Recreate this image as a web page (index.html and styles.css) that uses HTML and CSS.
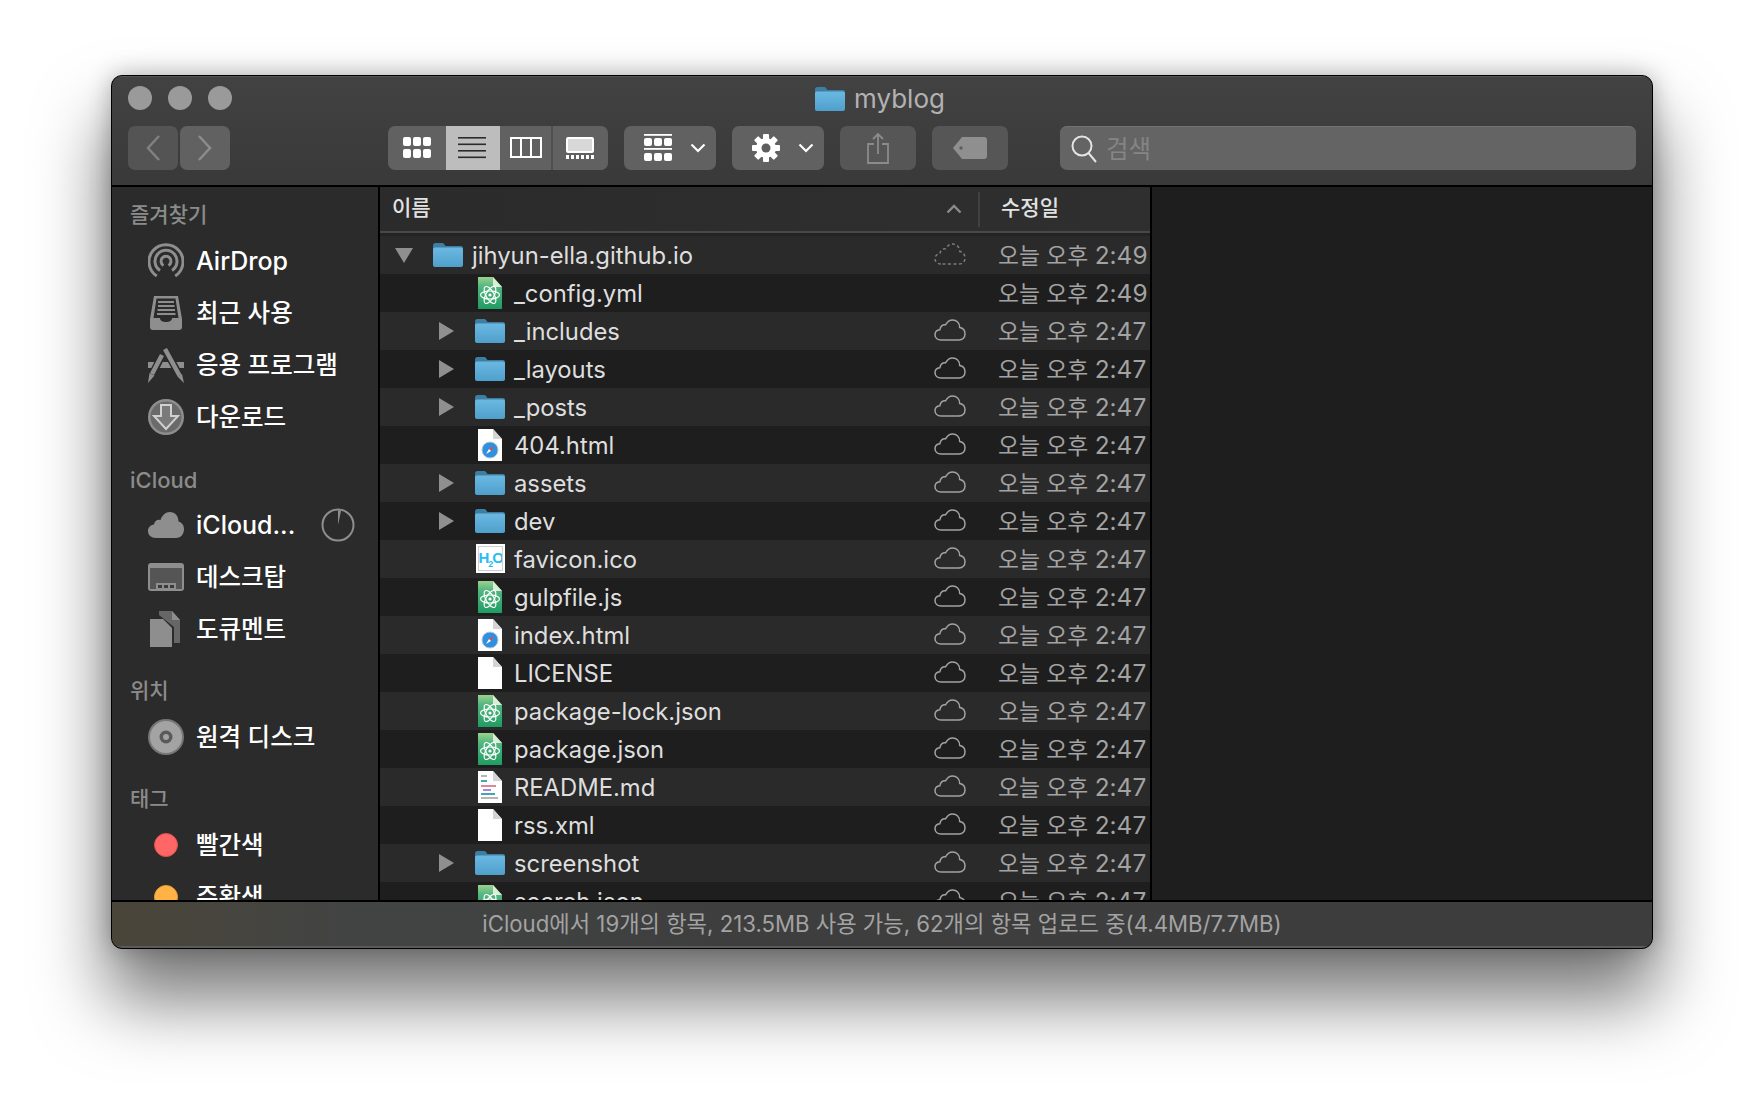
FILE: index.html
```html
<!DOCTYPE html>
<html lang="ko">
<head>
    <meta charset="utf-8">
    <title>myblog</title>
    <link rel="stylesheet" href="styles.css">
</head>
<body>
    <svg class="defs" width="0" height="0">
        <defs>
            <linearGradient id="folderFill" x1="0" y1="0" x2="0" y2="1">
                <stop offset="0" stop-color="#6bb9e2"/>
                <stop offset="1" stop-color="#4f9fcc"/>
            </linearGradient>
            <linearGradient id="atomFill" x1="0" y1="0" x2="0" y2="1">
                <stop offset="0" stop-color="#9bd28c"/>
                <stop offset="0.3" stop-color="#52b680"/>
                <stop offset="1" stop-color="#1f9c62"/>
            </linearGradient>
            <symbol id="folder" viewBox="0 0 30 24">
                <path d="M0 2.500C0 1 1 0 2.500 0H9c1 0 1.600.4 2.200 1.200L12.500 3H28c1.200 0 2 .8 2 2v4H0z" fill="#3f7ea3"/>
                <path d="M0 6.500C0 5.300.8 4.500 2 4.500h26c1.200 0 2 .8 2 2V22c0 1.200-.8 2-2 2H2c-1.200 0-2-.8-2-2z" fill="url(#folderFill)"/>
            </symbol>
            <symbol id="cloud" viewBox="0 0 32 22">
                <path d="M7 21C3.500 21 1 18.800 1 15.800c0-2.800 2-4.800 4.800-5C6.500 7 9 5.300 11.500 5.800 13.300 2.800 15.600 1 18.500 1c4.200 0 7 3 7.200 7.400 3.300.6 5.300 3.300 5.300 6.400 0 3.600-2.300 6.200-6 6.200z" fill="none" stroke="#a3a3a3" stroke-width="1.500"/>
            </symbol>
            <symbol id="cloudDash" viewBox="0 0 32 22">
                <path d="M7 21C3.500 21 1 18.800 1 15.800c0-2.800 2-4.800 4.800-5C6.500 7 9 5.300 11.500 5.800 13.300 2.800 15.600 1 18.500 1c4.200 0 7 3 7.200 7.400 3.300.6 5.300 3.300 5.300 6.400 0 3.600-2.300 6.200-6 6.200z" fill="none" stroke="#7c7c7c" stroke-width="1.500" stroke-dasharray="3 2.500"/>
            </symbol>
            <symbol id="atomDoc" viewBox="0 0 24 32">
                <path d="M0 0H15L24 10V32H0z" fill="url(#atomFill)"/>
                <path d="M15 0L24 10H15z" fill="#dcefd6"/>
                <g fill="none" stroke="#fff" stroke-width="1.200">
                    <ellipse cx="12" cy="18" rx="9.500" ry="4"/>
                    <ellipse cx="12" cy="18" rx="9.500" ry="4" transform="rotate(60 12 18)"/>
                    <ellipse cx="12" cy="18" rx="9.500" ry="4" transform="rotate(120 12 18)"/>
                </g>
                <circle cx="12" cy="18" r="1.600" fill="#fff"/>
            </symbol>
            <symbol id="safariDoc" viewBox="0 0 24 32">
                <path d="M0 0H15L24 10V32H0z" fill="#fff"/>
                <path d="M15 0L24 10H15z" fill="#d4d4d4"/>
                <circle cx="12" cy="21" r="8" fill="#2f8fe0"/>
                <circle cx="12" cy="21" r="8" fill="none" stroke="#b9c6d2" stroke-width="1"/>
                <path d="M16 17L13 22 11 20z" fill="#f0473c"/>
                <path d="M8 25L11 20 13 22z" fill="#fff"/>
            </symbol>
            <symbol id="blankDoc" viewBox="0 0 24 32">
                <path d="M0 0H15L24 10V32H0z" fill="#fff"/>
                <path d="M15 0L24 10H15z" fill="#d4d4d4"/>
            </symbol>
            <symbol id="readmeDoc" viewBox="0 0 24 32">
                <path d="M0 0H15L24 10V32H0z" fill="#fff"/>
                <path d="M15 0L24 10H15z" fill="#d4d4d4"/>
                <rect x="3" y="4" width="6" height="2" fill="#b5b5b5"/>
                <rect x="3" y="9" width="6" height="2" fill="#45a5b5"/>
                <rect x="3" y="14" width="15" height="2" fill="#d98a94"/>
                <rect x="5" y="18" width="8" height="2" fill="#a982f0"/>
                <rect x="3" y="22" width="14" height="2" fill="#45a5b5"/>
                <rect x="3" y="26" width="17" height="2" fill="#b5b5b5"/>
            </symbol>
            <symbol id="triRight" viewBox="0 0 15 18"><path d="M0 0L15 9 0 18z" fill="#8f8f8f"/></symbol>
            <symbol id="triDown" viewBox="0 0 18 15"><path d="M0 0H18L9 15z" fill="#8f8f8f"/></symbol>
        </defs>
    </svg>

    <div class="window">
        <header class="toolbar">
            <div class="titlebar">
                <div class="lights"><i></i><i></i><i></i></div>
                <div class="title">
                    <svg class="ic-folder"><use href="#folder"/></svg>
                    <span>myblog</span>
                </div>
            </div>
            <div class="tools">
                <div class="nav">
                    <button class="btn nav-btn dim">
                        <svg width="18" height="30" viewBox="0 0 18 30"><path d="M15 3L4 15l11 12" fill="none" stroke="#808080" stroke-width="2.500"/></svg>
                    </button>
                    <button class="btn nav-btn">
                        <svg width="18" height="30" viewBox="0 0 18 30"><path d="M3 3l11 12L3 27" fill="none" stroke="#8c8c8c" stroke-width="2.500"/></svg>
                    </button>
                </div>
                <div class="seg">
                    <div class="seg-item seg-first">
                        <svg width="28" height="22" viewBox="0 0 28 22" fill="#fff">
                            <rect x="0" y="0" width="8" height="9" rx="2"/><rect x="10" y="0" width="8" height="9" rx="2"/><rect x="20" y="0" width="8" height="9" rx="2"/>
                            <rect x="0" y="12" width="8" height="9" rx="2"/><rect x="10" y="12" width="8" height="9" rx="2"/><rect x="20" y="12" width="8" height="9" rx="2"/>
                        </svg>
                    </div>
                    <div class="seg-item seg-on">
                        <svg width="28" height="22" viewBox="0 0 28 22" fill="#2b2b2b">
                            <rect y="0" width="28" height="1.600"/><rect y="6.500" width="28" height="1.600"/><rect y="13" width="28" height="1.600"/><rect y="19.500" width="28" height="1.600"/>
                        </svg>
                    </div>
                    <div class="seg-item seg-line">
                        <svg width="32" height="22" viewBox="0 0 32 22" fill="none" stroke="#fff" stroke-width="2">
                            <rect x="1" y="1" width="30" height="19"/><path d="M11 1v19M21 1v19"/>
                        </svg>
                    </div>
                    <div class="seg-item">
                        <svg width="28" height="22" viewBox="0 0 28 22" fill="#fff">
                            <rect x="1" y="1" width="26" height="14" rx="1" fill="#d8d8d8" stroke="#fff" stroke-width="2"/>
                            <rect x="0" y="18" width="3" height="4"/><rect x="5" y="18" width="3" height="4"/><rect x="10" y="18" width="3" height="4"/><rect x="15" y="18" width="3" height="4"/><rect x="20" y="18" width="3" height="4"/><rect x="25" y="18" width="3" height="4"/>
                        </svg>
                    </div>
                </div>
                <button class="btn menu-btn">
                    <svg width="28" height="28" viewBox="0 0 28 28" fill="#fff">
                        <rect y="0" width="28" height="1.800"/>
                        <rect x="0" y="4" width="8" height="8" rx="2"/><rect x="10" y="4" width="8" height="8" rx="2"/><rect x="20" y="4" width="8" height="8" rx="2"/>
                        <rect y="14" width="28" height="1.800"/>
                        <rect x="0" y="19" width="8" height="8" rx="2"/><rect x="10" y="19" width="8" height="8" rx="2"/><rect x="20" y="19" width="8" height="8" rx="2"/>
                    </svg>
                    <svg class="chev" width="16" height="10" viewBox="0 0 16 10"><path d="M1.500 1.500L8 8l6.500-6.500" fill="none" stroke="#fff" stroke-width="2.200"/></svg>
                </button>
                <button class="btn menu-btn gear-btn">
                    <svg width="28" height="28" viewBox="0 0 28 28">
                        <g fill="#fff">
                            <circle cx="14" cy="14" r="10"/>
                            <rect x="11" y="0" width="6" height="28" rx="1"/>
                            <rect x="11" y="0" width="6" height="28" rx="1" transform="rotate(45 14 14)"/>
                            <rect x="11" y="0" width="6" height="28" rx="1" transform="rotate(90 14 14)"/>
                            <rect x="11" y="0" width="6" height="28" rx="1" transform="rotate(135 14 14)"/>
                        </g>
                        <circle cx="14" cy="14" r="4.500" fill="#5e5e5e"/>
                    </svg>
                    <svg class="chev" width="16" height="10" viewBox="0 0 16 10"><path d="M1.500 1.500L8 8l6.500-6.500" fill="none" stroke="#fff" stroke-width="2.200"/></svg>
                </button>
                <button class="btn share-btn">
                    <svg width="22" height="32" viewBox="0 0 22 32" fill="none" stroke="#8b8b8b" stroke-width="1.800">
                        <path d="M7 12H1v19h20V12h-6"/><path d="M11 22V2M6 7l5-5 5 5"/>
                    </svg>
                </button>
                <button class="btn tag-btn">
                    <svg width="34" height="22" viewBox="0 0 34 22"><path d="M9 0H31c1.800 0 3 1.200 3 3v16c0 1.800-1.200 3-3 3H9L0 11z" fill="#8f8f8f"/><circle cx="8" cy="11" r="1.700" fill="#5e5e5e"/></svg>
                </button>
                <div class="search">
                    <svg width="26" height="28" viewBox="0 0 26 28" fill="none" stroke="#e4e4e4" stroke-width="2"><circle cx="11" cy="11" r="9.500"/><path d="M17.500 18L25 27"/></svg>
                    <span class="ko">검색</span>
                </div>
            </div>
        </header>

        <div class="content">
            <nav class="sidebar">
                <h4>즐겨찾기</h4>
                <div class="side-item">
                    <svg class="side-ic" viewBox="0 0 36 36" fill="none" stroke="#8e8e8e" stroke-width="3">
                        <path d="M8.800 33A17 17 0 1 1 27.200 33"/><path d="M12 27.500A11 11 0 1 1 24 27.500"/><path d="M15.500 22.500A5 5 0 1 1 20.500 22.500"/>
                    </svg>
                    <span>AirDrop</span>
                </div>
                <div class="side-item">
                    <svg class="side-ic" viewBox="0 0 36 36">
                        <path d="M6 1H30L34 24V32C34 34 33 35 31 35H5C3 35 2 34 2 32V24z" fill="#8e8e8e"/>
                        <path d="M8.500 3.500H27.500L30.500 23H24C24 26 21 27 18 27S12 26 12 23H5.500z" fill="#2b2b2b"/>
                        <path d="M10 7H26M10 11H26.500M9.500 15H27M9 19H27.500" stroke="#8e8e8e" stroke-width="2"/>
                    </svg>
                    <span class="ko">최근 사용</span>
                </div>
                <div class="side-item">
                    <svg class="side-ic" viewBox="0 0 36 36">
                        <rect x="0" y="15" width="36" height="6" fill="#8e8e8e"/>
                        <path d="M17 2L33 31M14 8L3 30" stroke="#2b2b2b" stroke-width="7.500"/>
                        <path d="M17 2L31.500 28.500M14 8L4 27" stroke="#8e8e8e" stroke-width="4.500"/>
                        <path d="M1.500 26L6.500 28.500 0 36zM29.500 29.500L34 27 36 36z" fill="#8e8e8e"/>
                    </svg>
                    <span class="ko">응용 프로그램</span>
                </div>
                <div class="side-item">
                    <svg class="side-ic" viewBox="0 0 36 36">
                        <circle cx="18" cy="18" r="18" fill="#8e8e8e"/>
                        <circle cx="18" cy="18" r="15.500" fill="#6a6a6a"/>
                        <path d="M13 6H23V17H30L18 30 6 17H13z" fill="#7a7a7a" stroke="#d0d0d0" stroke-width="2"/>
                    </svg>
                    <span class="ko">다운로드</span>
                </div>

                <h4 class="latin">iCloud</h4>
                <div class="side-item">
                    <svg class="side-ic" viewBox="0 0 36 26"><path d="M8 26C3 26 0 23 0 19c0-3.500 2.500-6 6-6.500C6.500 9 9.500 7 12.500 8 14 3.500 17.500 0 22 0c5 0 8.500 4 8.500 9.500 3.500 1 5.500 4 5.500 7.500 0 5-3 9-8 9z" fill="#8e8e8e"/></svg>
                    <span>iCloud...</span>
                    <svg class="progress" width="34" height="34" viewBox="0 0 34 34" fill="none" stroke="#8e8e8e" stroke-width="2"><circle cx="17" cy="17" r="15.500"/><path d="M17 17L20 3L17 2z" fill="#8e8e8e" stroke="none"/></svg>
                </div>
                <div class="side-item">
                    <svg class="side-ic" viewBox="0 0 36 28">
                        <rect width="36" height="28" rx="3" fill="#8e8e8e"/>
                        <rect x="2" y="5" width="32" height="21" fill="#555"/>
                        <rect x="8" y="20" width="20" height="8" fill="#8e8e8e"/>
                        <path d="M10 22h4v3h-4zM16 22h4v3h-4zM22 22h4v3h-4z" fill="#3a3a3a"/>
                    </svg>
                    <span class="ko">데스크탑</span>
                </div>
                <div class="side-item">
                    <svg class="side-ic" viewBox="0 0 36 36">
                        <path d="M11 0H24L32 9V32H26V16L11 4z" fill="#666"/>
                        <path d="M2 8H15L24 17V36H2z" fill="#8e8e8e"/>
                        <path d="M11 0H22L22 7 11 3z" fill="#666"/>
                        <path d="M24 0L32 9H24z" fill="#8e8e8e"/>
                    </svg>
                    <span class="ko">도큐멘트</span>
                </div>

                <h4>위치</h4>
                <div class="side-item">
                    <svg class="side-ic" viewBox="0 0 36 36">
                        <circle cx="18" cy="18" r="18" fill="#777"/>
                        <circle cx="18" cy="18" r="16" fill="#a3a3a3"/>
                        <circle cx="18" cy="18" r="6.500" fill="#5a5a5a"/>
                        <circle cx="18" cy="18" r="3" fill="#a3a3a3"/>
                    </svg>
                    <span class="ko">원격 디스크</span>
                </div>

                <h4>태그</h4>
                <div class="side-item">
                    <i class="dot dot-red"></i>
                    <span class="ko">빨간색</span>
                </div>
                <div class="side-item">
                    <i class="dot dot-orange"></i>
                    <span class="ko">주황색</span>
                </div>
            </nav>

            <section class="files">
                <div class="list-head">
                    <span class="head-name">이름</span>
                    <svg class="sort-caret" width="16" height="10" viewBox="0 0 16 10"><path d="M1.500 8.500L8 2l6.500 6.500" fill="none" stroke="#8c8c8c" stroke-width="2.400"/></svg>
                    <span class="head-date">수정일</span>
                </div>
                <div class="rows">
                    <div class="row top"><svg class="tri-down"><use href="#triDown"/></svg><svg class="ic-folder"><use href="#folder"/></svg><span class="name">jihyun-ella.github.io</span><svg class="ic-cloud"><use href="#cloudDash"/></svg><span class="date">오늘 오후 <span>2:49</span></span></div>
                    <div class="row"><svg class="ic-doc"><use href="#atomDoc"/></svg><span class="name">_config.yml</span><span class="date">오늘 오후 <span>2:49</span></span></div>
                    <div class="row"><svg class="tri"><use href="#triRight"/></svg><svg class="ic-folder"><use href="#folder"/></svg><span class="name">_includes</span><svg class="ic-cloud"><use href="#cloud"/></svg><span class="date">오늘 오후 <span>2:47</span></span></div>
                    <div class="row"><svg class="tri"><use href="#triRight"/></svg><svg class="ic-folder"><use href="#folder"/></svg><span class="name">_layouts</span><svg class="ic-cloud"><use href="#cloud"/></svg><span class="date">오늘 오후 <span>2:47</span></span></div>
                    <div class="row"><svg class="tri"><use href="#triRight"/></svg><svg class="ic-folder"><use href="#folder"/></svg><span class="name">_posts</span><svg class="ic-cloud"><use href="#cloud"/></svg><span class="date">오늘 오후 <span>2:47</span></span></div>
                    <div class="row"><svg class="ic-doc"><use href="#safariDoc"/></svg><span class="name">404.html</span><svg class="ic-cloud"><use href="#cloud"/></svg><span class="date">오늘 오후 <span>2:47</span></span></div>
                    <div class="row"><svg class="tri"><use href="#triRight"/></svg><svg class="ic-folder"><use href="#folder"/></svg><span class="name">assets</span><svg class="ic-cloud"><use href="#cloud"/></svg><span class="date">오늘 오후 <span>2:47</span></span></div>
                    <div class="row"><svg class="tri"><use href="#triRight"/></svg><svg class="ic-folder"><use href="#folder"/></svg><span class="name">dev</span><svg class="ic-cloud"><use href="#cloud"/></svg><span class="date">오늘 오후 <span>2:47</span></span></div>
                    <div class="row"><div class="ic-h2o"><b>H<sub>2</sub>O</b></div><span class="name">favicon.ico</span><svg class="ic-cloud"><use href="#cloud"/></svg><span class="date">오늘 오후 <span>2:47</span></span></div>
                    <div class="row"><svg class="ic-doc"><use href="#atomDoc"/></svg><span class="name">gulpfile.js</span><svg class="ic-cloud"><use href="#cloud"/></svg><span class="date">오늘 오후 <span>2:47</span></span></div>
                    <div class="row"><svg class="ic-doc"><use href="#safariDoc"/></svg><span class="name">index.html</span><svg class="ic-cloud"><use href="#cloud"/></svg><span class="date">오늘 오후 <span>2:47</span></span></div>
                    <div class="row"><svg class="ic-doc"><use href="#blankDoc"/></svg><span class="name">LICENSE</span><svg class="ic-cloud"><use href="#cloud"/></svg><span class="date">오늘 오후 <span>2:47</span></span></div>
                    <div class="row"><svg class="ic-doc"><use href="#atomDoc"/></svg><span class="name">package-lock.json</span><svg class="ic-cloud"><use href="#cloud"/></svg><span class="date">오늘 오후 <span>2:47</span></span></div>
                    <div class="row"><svg class="ic-doc"><use href="#atomDoc"/></svg><span class="name">package.json</span><svg class="ic-cloud"><use href="#cloud"/></svg><span class="date">오늘 오후 <span>2:47</span></span></div>
                    <div class="row"><svg class="ic-doc"><use href="#readmeDoc"/></svg><span class="name">README.md</span><svg class="ic-cloud"><use href="#cloud"/></svg><span class="date">오늘 오후 <span>2:47</span></span></div>
                    <div class="row"><svg class="ic-doc"><use href="#blankDoc"/></svg><span class="name">rss.xml</span><svg class="ic-cloud"><use href="#cloud"/></svg><span class="date">오늘 오후 <span>2:47</span></span></div>
                    <div class="row"><svg class="tri"><use href="#triRight"/></svg><svg class="ic-folder"><use href="#folder"/></svg><span class="name">screenshot</span><svg class="ic-cloud"><use href="#cloud"/></svg><span class="date">오늘 오후 <span>2:47</span></span></div>
                    <div class="row"><svg class="ic-doc"><use href="#atomDoc"/></svg><span class="name">search.json</span><svg class="ic-cloud"><use href="#cloud"/></svg><span class="date">오늘 오후 <span>2:47</span></span></div>
                </div>
            </section>
            <div class="empty"></div>
        </div>

        <footer class="status">iCloud에서 19개의 항목, 213.5MB 사용 가능, 62개의 항목 업로드 중(4.4MB/7.7MB)</footer>
    </div>
</body>
</html>
```

FILE: styles.css
```css
* {
    box-sizing: border-box;
}

html,
body {
    margin: 0;
    height: 100%;
}

body {
    background: #fff;
    padding: 75px 111px 0;
    overflow: hidden;
    font-family: Inter, "Noto Sans CJK KR", sans-serif;
}

.defs {
    display: block;
    height: 0;
}

.window {
    width: 1542px;
    height: 874px;
    display: flex;
    flex-direction: column;
    overflow: hidden;
    background: #1e1e1e;
    border: 1px solid #000;
    border-radius: 11px;
    box-shadow: 0 48px 70px 4px rgba(0, 0, 0, .52), 0 0 24px rgba(0, 0, 0, .28);
}

/* toolbar */
.toolbar {
    height: 111px;
    flex: none;
    background: linear-gradient(#424242, #393939);
    border-top: 1px solid #555;
    border-bottom: 2px solid #000;
}

.titlebar {
    height: 49px;
    position: relative;
    display: flex;
    align-items: center;
    justify-content: center;
    padding-bottom: 6px;
}

.lights {
    position: absolute;
    left: 16px;
    top: 9px;
    display: flex;
    gap: 16px;
}

.lights i {
    width: 24px;
    height: 24px;
    border-radius: 50%;
    background: #9a9a9a;
}

.title {
    display: flex;
    align-items: center;
    gap: 9px;
    margin-left: -4px;
    color: #b2b2b2;
    font-size: 26px;
}

.tools {
    display: flex;
    align-items: center;
    height: 44px;
    padding-left: 16px;
}

.btn {
    height: 44px;
    padding: 0;
    border: 0;
    border-radius: 7px;
    background: #616161;
    display: flex;
    align-items: center;
    justify-content: center;
}

.nav {
    display: flex;
    gap: 2px;
    margin-right: 158px;
}

.nav-btn {
    width: 50px;
}

.nav-btn.dim {
    background: #545454;
}

.seg {
    display: flex;
    width: 220px;
    height: 44px;
    border-radius: 7px;
    overflow: hidden;
    background: #616161;
    margin-right: 16px;
}

.seg-item {
    width: 54px;
    display: flex;
    align-items: center;
    justify-content: center;
}

.seg-first {
    width: 58px;
}

.seg-on {
    background: #bdbdbd;
    padding-right: 2px;
}

.seg-line {
    width: 53px;
    border-right: 2px solid #4f4f4f;
}

.menu-btn {
    width: 92px;
    gap: 18px;
    padding-left: 9px;
    margin-right: 16px;
}

.share-btn,
.tag-btn {
    width: 76px;
    background: #565656;
    margin-right: 16px;
}

.tag-btn {
    margin-right: 52px;
}

.search {
    width: 576px;
    height: 44px;
    display: flex;
    align-items: center;
    gap: 9px;
    padding-left: 11px;
    border-radius: 7px;
    background: #646464;
    border-top: 1px solid #737373;
    color: #858585;
    font-size: 24.5px;
}

.search .ko {
    padding-bottom: 3px;
}

/* content */
.content {
    flex: 1;
    min-height: 0;
    display: flex;
    overflow: hidden;
}

.sidebar {
    width: 268px;
    flex: none;
    padding-top: 8px;
    background: #2b2b2b;
    border-right: 2px solid #000;
    overflow: hidden;
}

.sidebar h4 {
    margin: 16px 0 0;
    height: 40px;
    padding: 0 0 4px 18px;
    display: flex;
    align-items: center;
    color: #8b8b8b;
    font-size: 21px;
    font-weight: 500;
}

.sidebar h4:first-child {
    margin-top: 0;
}

.sidebar h4.latin {
    padding: 2px 0 0 18px;
    font-size: 22px;
}

.side-item {
    height: 52px;
    display: flex;
    align-items: center;
    padding-left: 36px;
    color: #fff;
    font-size: 25px;
    font-weight: 500;
    position: relative;
}

.side-item .ko {
    font-size: 24.5px;
    padding-bottom: 4px;
}

.side-ic {
    width: 36px;
    height: 36px;
    flex: none;
    margin-right: 12px;
}

.progress {
    position: absolute;
    left: 209px;
    top: 9px;
}

.dot {
    width: 24px;
    height: 24px;
    flex: none;
    margin: 0 18px 0 6px;
    border-radius: 50%;
}

.dot-red {
    background: #ff6666;
    border: 1px solid #e04f4f;
}

.dot-orange {
    background: #ffb347;
    border: 1px solid #e89c33;
}

/* file list */
.files {
    width: 772px;
    flex: none;
    background: #1e1e1e;
    border-right: 2px solid #000;
    overflow: hidden;
}

.list-head {
    height: 46px;
    position: relative;
    background: linear-gradient(90deg, #2b2b2b, #2f2f2f);
    border-bottom: 2px solid #484848;
    font-size: 21px;
    color: #e2e2e2;
    font-weight: 500;
}

.list-head::after {
    content: "";
    position: absolute;
    left: 598px;
    top: 5px;
    height: 35px;
    width: 2px;
    background: #424242;
}

.head-name,
.head-date,
.sort-caret {
    position: absolute;
}

.head-name {
    left: 12px;
    top: 4px;
}

.head-date {
    left: 621px;
    top: 4px;
}

.sort-caret {
    left: 566px;
    top: 17px;
}

.rows {
    padding-top: 3px;
    background: #232323;
}

.rows .row:nth-child(odd) {
    background: #2a2a2a;
}

.rows .row:nth-child(even) {
    background: #1e1e1e;
}

.row {
    height: 38px;
    display: flex;
    align-items: center;
    position: relative;
    padding-left: 134px;
    color: #dedede;
    font-size: 23.8px;
}

.row.top {
    padding-left: 92px;
}

.row svg {
    flex: none;
}

.name {
    white-space: nowrap;
}

.tri,
.tri-down,
.ic-folder,
.ic-doc,
.ic-h2o {
    display: block;
}

.row .tri {
    position: absolute;
    left: 59px;
    top: 10px;
    width: 15px;
    height: 18px;
}

.row .tri-down {
    position: absolute;
    left: 15px;
    top: 12px;
    width: 18px;
    height: 15px;
}

.ic-folder {
    width: 30px;
    height: 24px;
}

.row .ic-folder {
    position: absolute;
    left: 95px;
    top: 7px;
}

.row.top .ic-folder {
    left: 53px;
}

.ic-doc {
    position: absolute;
    left: 98px;
    top: 3px;
    width: 24px;
    height: 32px;
}

.ic-h2o {
    position: absolute;
    left: 96px;
    top: 4px;
    width: 29px;
    height: 29px;
    display: flex;
    justify-content: flex-end;
    background: #fff;
    border: 2px solid #fff;
    outline: 1px solid #cfcfcf;
    outline-offset: -3px;
    overflow: hidden;
    color: #27bdf2;
    font-family: "Liberation Sans", sans-serif;
    font-size: 15px;
    line-height: 23px;
    letter-spacing: -1px;
}

.ic-h2o sub {
    font-size: 9px;
    line-height: 0;
}

.row .ic-cloud {
    position: absolute;
    left: 554px;
    top: 7px;
    width: 32px;
    height: 22px;
}

.date {
    position: absolute;
    left: 618px;
    top: 0;
    line-height: 38px;
    color: #a3a3a3;
    font-size: 22.8px;
    white-space: nowrap;
}

.date span {
    font-size: 24.4px;
}

.empty {
    flex: 1;
    background: #1e1e1e;
}

/* status bar */
.status {
    height: 48px;
    flex: none;
    display: flex;
    align-items: center;
    justify-content: center;
    padding-bottom: 4px;
    background: linear-gradient(90deg, #4a4539, #424444 16%, #3e3e3e 40%, #3d3d3d);
    border-top: 2px solid #000;
    border-bottom: 2px solid #5a5a5a;
    color: #a3a3a3;
    font-size: 22.2px;
}
```
